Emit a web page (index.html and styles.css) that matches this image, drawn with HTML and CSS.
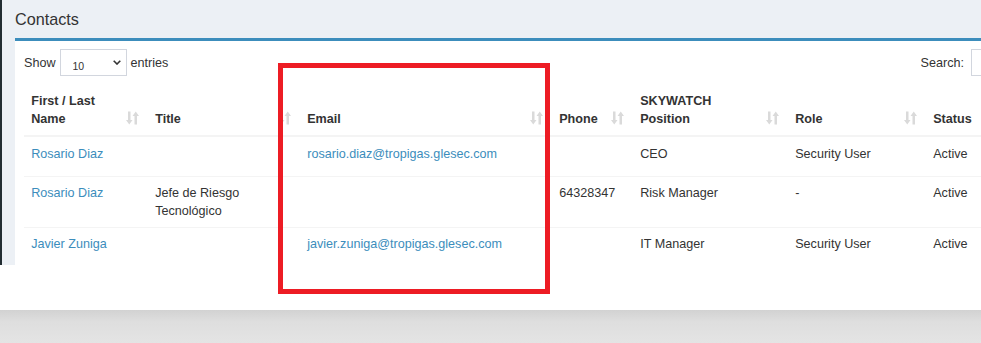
FILE: index.html
```html
<!DOCTYPE html>
<html lang="en">
<head>
    <meta charset="UTF-8">
    <title>Contacts</title>
    <link rel="stylesheet" href="styles.css">
</head>
<body>
    <div class="screen">
        <div class="app">
            <aside class="sidebar"></aside>
            <main class="content">
                <h1 class="page-title">Contacts</h1>
                <section class="box">
                    <div class="toolbar">
                        <label class="length">
                            Show
                            <span class="select-wrap">
                                <select><option>10</option><option>25</option><option>50</option></select>
                                <svg class="chevron" width="8" height="5" viewBox="0 0 8 5"><path d="M0.7 0.7 4 4 7.3 0.7" fill="none" stroke="#333" stroke-width="1.6"/></svg>
                            </span>
                            entries
                        </label>
                        <label class="search">Search: <input type="search"></label>
                    </div>

                    <table class="data-table">
                        <colgroup>
                            <col style="width:124px">
                            <col style="width:152px">
                            <col style="width:252px">
                            <col style="width:81px">
                            <col style="width:155px">
                            <col style="width:138px">
                            <col>
                        </colgroup>
                        <thead>
                            <tr>
                                <th class="sorting">First / Last Name<svg class="sort-icon" viewBox="0 0 13 14"><path d="M2 0.5h2.5v8.5h2L3.25 13.5 0 9h2z"/><path d="M9.75 0.5 13 5h-2v8.5H8.5V5h-2z"/></svg></th>
                                <th class="sorting">Title<svg class="sort-icon" viewBox="0 0 13 14"><path d="M2 0.5h2.5v8.5h2L3.25 13.5 0 9h2z"/><path d="M9.75 0.5 13 5h-2v8.5H8.5V5h-2z"/></svg></th>
                                <th class="sorting">Email<svg class="sort-icon" viewBox="0 0 13 14"><path d="M2 0.5h2.5v8.5h2L3.25 13.5 0 9h2z"/><path d="M9.75 0.5 13 5h-2v8.5H8.5V5h-2z"/></svg></th>
                                <th class="sorting">Phone<svg class="sort-icon" viewBox="0 0 13 14"><path d="M2 0.5h2.5v8.5h2L3.25 13.5 0 9h2z"/><path d="M9.75 0.5 13 5h-2v8.5H8.5V5h-2z"/></svg></th>
                                <th class="sorting">SKYWATCH Position<svg class="sort-icon" viewBox="0 0 13 14"><path d="M2 0.5h2.5v8.5h2L3.25 13.5 0 9h2z"/><path d="M9.75 0.5 13 5h-2v8.5H8.5V5h-2z"/></svg></th>
                                <th class="sorting">Role<svg class="sort-icon" viewBox="0 0 13 14"><path d="M2 0.5h2.5v8.5h2L3.25 13.5 0 9h2z"/><path d="M9.75 0.5 13 5h-2v8.5H8.5V5h-2z"/></svg></th>
                                <th class="sorting">Status<svg class="sort-icon" viewBox="0 0 13 14"><path d="M2 0.5h2.5v8.5h2L3.25 13.5 0 9h2z"/><path d="M9.75 0.5 13 5h-2v8.5H8.5V5h-2z"/></svg></th>
                            </tr>
                        </thead>
                        <tbody>
                            <tr>
                                <td><a href="#">Rosario Diaz</a></td>
                                <td></td>
                                <td><a href="#">rosario.diaz@tropigas.glesec.com</a></td>
                                <td></td>
                                <td>CEO</td>
                                <td>Security User</td>
                                <td>Active</td>
                            </tr>
                            <tr>
                                <td><a href="#">Rosario Diaz</a></td>
                                <td>Jefe de Riesgo Tecnológico</td>
                                <td></td>
                                <td>64328347</td>
                                <td>Risk Manager</td>
                                <td>-</td>
                                <td>Active</td>
                            </tr>
                            <tr>
                                <td><a href="#">Javier Zuniga</a></td>
                                <td></td>
                                <td><a href="#">javier.zuniga@tropigas.glesec.com</a></td>
                                <td></td>
                                <td>IT Manager</td>
                                <td>Security User</td>
                                <td>Active</td>
                            </tr>
                        </tbody>
                    </table>
                </section>
            </main>
        </div>
        <div class="page-end"></div>
        <div class="taskbar"></div>
    </div>

    <!-- annotation drawn over the email column -->
    <div class="highlight"></div>
</body>
</html>
```

FILE: styles.css
```css
body {
    margin: 0;
    width: 981px;
    height: 343px;
    overflow: hidden;
    font-family: 'Liberation Sans', Arial, sans-serif;
    font-size: 12.6px;
    line-height: 18px;
    color: #333;
    background-color: #fff;
    position: relative;
}

.screen {
    display: flex;
    flex-direction: column;
}

.app {
    display: flex;
    height: 265px;
    overflow: hidden;
}

.sidebar {
    width: 2px;
    flex-shrink: 0;
    background-color: #222d32;
}

.content {
    flex: 1;
    min-width: 0;
    padding-left: 13px;
    background-color: #ecf0f5;
    overflow: hidden;
}

.page-title {
    margin: 10px 0 9px;
    font-size: 16.2px;
    font-weight: normal;
    line-height: 19px;
    color: #333;
}

.box {
    width: 1100px;
    box-sizing: border-box;
    min-height: 240px;
    padding: 8px 9px;
    background-color: #fff;
    border-top: 3px solid #3c8dbc;
}

.toolbar {
    display: flex;
    justify-content: space-between;
    align-items: center;
}

.length {
    display: flex;
    align-items: center;
    gap: 4px;
}

.select-wrap {
    position: relative;
    display: inline-block;
}

.select-wrap select {
    appearance: none;
    -webkit-appearance: none;
    width: 67px;
    height: 27px;
    box-sizing: border-box;
    padding: 7px 0 0 12px;
    border: 1px solid #d2d6de;
    border-radius: 0;
    background-color: #fff;
    font-family: 'Liberation Sans', Arial, sans-serif;
    font-size: 10.5px;
    color: #333;
}

.chevron {
    position: absolute;
    right: 6px;
    top: 11px;
    pointer-events: none;
}

.search {
    display: flex;
    align-items: center;
    gap: 7px;
}

.search input {
    width: 135px;
    height: 27px;
    box-sizing: border-box;
    border: 1px solid #d2d6de;
}

.data-table {
    width: 1082px;
    margin-top: 9px;
    border-collapse: collapse;
    table-layout: fixed;
}

.data-table th,
.data-table td {
    padding: 7.2px;
    text-align: left;
    border-top: 1px solid #f4f4f4;
}

.data-table th {
    position: relative;
    padding-right: 27px;
    vertical-align: bottom;
    font-weight: bold;
    border-top: 0;
    border-bottom: 2px solid #f4f4f4;
}

.data-table tbody tr {
    height: 40px;
}

.data-table td {
    vertical-align: top;
}

.data-table a {
    color: #3c8dbc;
    text-decoration: none;
}

.sort-icon {
    position: absolute;
    right: 9px;
    bottom: 10px;
    width: 13px;
    height: 14px;
    fill: #dadada;
}

.page-end {
    height: 45px;
    background-color: #fff;
}

.taskbar {
    height: 33px;
    background: linear-gradient(#d2d2d2, #dedede 35%, #e4e4e4);
}

.highlight {
    position: absolute;
    left: 278px;
    top: 63px;
    width: 272px;
    height: 231px;
    box-sizing: border-box;
    border: 5px solid #ed1c24;
}
```
